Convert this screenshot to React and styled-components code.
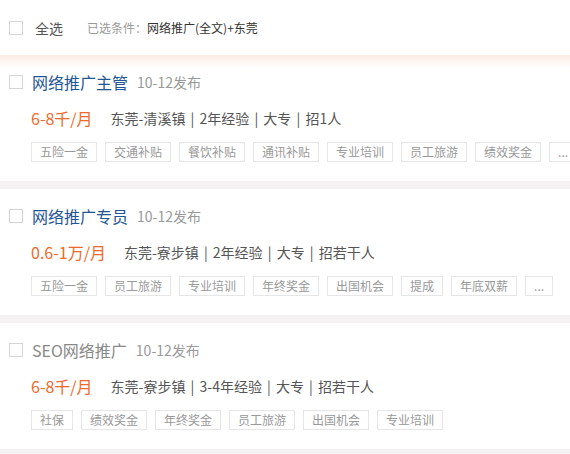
import React from "react";
import styled, { createGlobalStyle } from "styled-components";

const Global = createGlobalStyle`
  html, body { margin: 0; padding: 0; background: #fff; }
  body {
    font-family: "Microsoft YaHei", "Noto Sans CJK SC", "Noto Sans", sans-serif;
    width: 570px;
    overflow: hidden;
  }
`;

const Page = styled.div`
  width: 570px;
  background: #f4f2f2;
  display: flex;
  flex-direction: column;
  gap: 8px;
  padding-bottom: 8px;
`;

const Header = styled.div`
  height: 55px;
  display: flex;
  align-items: center;
  padding-left: 9px;
  background: #fff;
  margin-bottom: -8px;
`;

const Box = styled.span`
  width: 12px;
  height: 12px;
  border: 1px solid #d6d6d6;
  background: #fff;
  flex: none;
  box-sizing: content-box;
`;

const AllLabel = styled.span`
  font-size: 14px;
  color: #555;
  margin-left: 12px;
  line-height: 20px;
`;

const CondLabel = styled.span`
  font-size: 12px;
  color: #999;
  margin-left: 24px;
  line-height: 20px;
`;

const CondValue = styled.span`
  font-size: 12px;
  color: #333;
  line-height: 20px;
`;

const Card = styled.div`
  background: ${(p) =>
    p.$first ? "linear-gradient(#fcece3 0px, #fff 13px)" : "#fff"};
  height: 126px;
  box-sizing: border-box;
  padding: 15px 0 0 9px;
  display: flex;
  flex-direction: column;
  gap: 12px;
  overflow: hidden;
`;

const TitleRow = styled.div`
  display: flex;
  align-items: center;
  height: 24px;
`;

const Title = styled.span`
  font-size: 16px;
  color: ${(p) => (p.$muted ? "#888" : "#1f5694")};
  margin-left: 9px;
  line-height: 24px;
  white-space: nowrap;
`;

const DateText = styled.span`
  font-size: 14px;
  color: #999;
  margin-left: 9px;
  line-height: 24px;
`;

const InfoRow = styled.div`
  display: flex;
  align-items: center;
  height: 24px;
  padding-left: 22px;
  white-space: nowrap;
`;

const Salary = styled.span`
  font-size: 16px;
  color: #ef692b;
  line-height: 24px;
`;

const Meta = styled.span`
  font-size: 14px;
  color: #555;
  margin-left: 18px;
  line-height: 24px;
  word-spacing: 2px;
`;

const Tags = styled.div`
  display: flex;
  gap: 8px;
  padding-left: 22px;
  white-space: nowrap;
`;

const Tag = styled.span`
  flex: none;
  height: 20px;
  box-sizing: border-box;
  border: 1px solid #e6e6e6;
  padding: 0 8px;
  font-size: 12px;
  line-height: 18px;
  color: #999;
`;

const jobs = [
  {
    title: "网络推广主管",
    salary: "6-8千/月",
    meta: "东莞-清溪镇 | 2年经验 | 大专 | 招1人",
    tags: ["五险一金", "交通补贴", "餐饮补贴", "通讯补贴", "专业培训", "员工旅游", "绩效奖金", "..."],
  },
  {
    title: "网络推广专员",
    salary: "0.6-1万/月",
    meta: "东莞-寮步镇 | 2年经验 | 大专 | 招若干人",
    tags: ["五险一金", "员工旅游", "专业培训", "年终奖金", "出国机会", "提成", "年底双薪", "..."],
  },
  {
    title: "SEO网络推广",
    muted: true,
    salary: "6-8千/月",
    meta: "东莞-寮步镇 | 3-4年经验 | 大专 | 招若干人",
    tags: ["社保", "绩效奖金", "年终奖金", "员工旅游", "出国机会", "专业培训"],
  },
];

export default function App() {
  return (
    <>
      <Global />
      <Page>
        <Header>
          <Box />
          <AllLabel>全选</AllLabel>
          <CondLabel>已选条件：</CondLabel>
          <CondValue>网络推广(全文)+东莞</CondValue>
        </Header>
        {jobs.map((j, i) => (
          <Card key={i} $first={i === 0}>
            <TitleRow>
              <Box />
              <Title $muted={j.muted}>{j.title}</Title>
              <DateText>10-12发布</DateText>
            </TitleRow>
            <InfoRow>
              <Salary>{j.salary}</Salary>
              <Meta>{j.meta}</Meta>
            </InfoRow>
            <Tags>
              {j.tags.map((t) => (
                <Tag key={t}>{t}</Tag>
              ))}
            </Tags>
          </Card>
        ))}
      </Page>
    </>
  );
}
